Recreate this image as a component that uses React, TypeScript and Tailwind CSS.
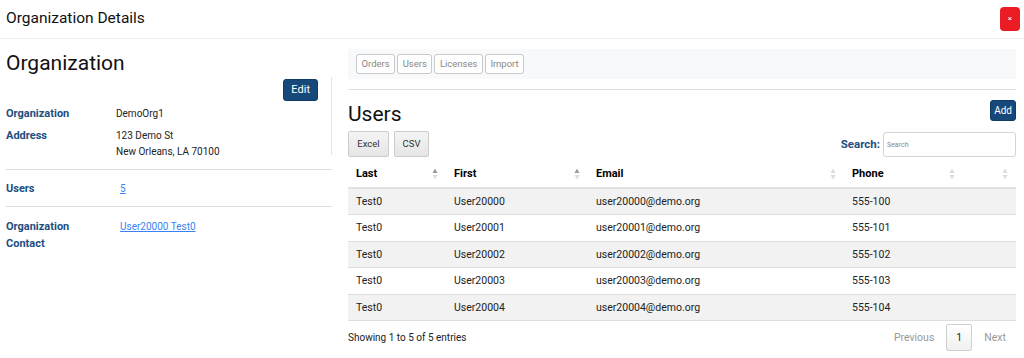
import { useState } from "react";

const users = [
  { last: "Test0", first: "User20000", email: "user20000@demo.org", phone: "555-100" },
  { last: "Test0", first: "User20001", email: "user20001@demo.org", phone: "555-101" },
  { last: "Test0", first: "User20002", email: "user20002@demo.org", phone: "555-102" },
  { last: "Test0", first: "User20003", email: "user20003@demo.org", phone: "555-103" },
  { last: "Test0", first: "User20004", email: "user20004@demo.org", phone: "555-104" },
];

const tabs = ["Orders", "Users", "Licenses", "Import"];

function SortIcon({ active }: { active?: boolean }) {
  return (
    <svg width="6" height="12" viewBox="0 0 6 12" className="shrink-0">
      <path d="M3 0.5 L5.5 5 H0.5 Z" fill={active ? "#9a9a9a" : "#dcdcdc"} />
      <path d="M3 11.5 L5.5 7 H0.5 Z" fill="#dcdcdc" />
    </svg>
  );
}

function Th({ label, width, active }: { label: string; width: string; active?: boolean }) {
  return (
    <th className={`${width} h-[27px] px-2 text-left font-bold text-[11px] text-black`}>
      <div className="flex items-center justify-between">
        <span>{label}</span>
        <SortIcon active={active} />
      </div>
    </th>
  );
}

export default function App() {
  const [query, setQuery] = useState("");

  return (
    <div
      className="w-[1024px] h-[358px] bg-white text-[#222] overflow-hidden"
      style={{ fontFamily: "Roboto, 'Noto Sans', sans-serif" }}
    >
      {/* Header */}
      <div className="h-[39px] flex items-center justify-between pl-[6px] pr-[4px] border-b border-[#eeeeee]">
        <span className="text-[15.5px] text-[#111]">Organization Details</span>
        <button className="w-[20px] h-[24px] rounded-[4px] bg-[#ec1c24] text-white text-[8px] leading-none flex items-center justify-center">
          ×
        </button>
      </div>

      <div className="flex pl-[6px] pr-[8px]">
        {/* Left */}
        <div className="w-[326px] shrink-0 pt-[10px]">
          <h1 className="text-[21px] leading-[28px] text-[#111]">Organization</h1>
          <div className="flex">
            <div className="flex-1">
              <div className="h-[29px]" />
              <div className="flex items-baseline leading-[16px]">
                <div className="w-[110px] font-bold text-[11px] text-[#1d4e80]">Organization</div>
                <div className="text-[10px]">DemoOrg1</div>
              </div>
              <div className="flex items-baseline leading-[16px] mt-[6px]">
                <div className="w-[110px] font-bold text-[11px] text-[#1d4e80]">Address</div>
                <div className="text-[10px]">
                  <div>123 Demo St</div>
                  <div>New Orleans, LA 70100</div>
                </div>
              </div>
            </div>
            <div className="pr-[13px] pt-[2px] border-r border-[#e5e5e5] h-[78px] flex items-start">
              <button className="h-[22px] px-[7px] rounded-[3px] bg-[#16497a] border border-[#0f3b66] text-white text-[11px]">
                Edit
              </button>
            </div>
          </div>
          <div className="border-t border-[#dddddd] mt-[9px]" />
          <div className="flex items-baseline leading-[16px] pt-[11px] pb-[9px]">
            <div className="w-[114px] font-bold text-[11px] text-[#1d4e80]">Users</div>
            <a className="text-[10px] text-[#3b82f6] underline">5</a>
          </div>
          <div className="border-t border-[#dddddd]" />
          <div className="flex leading-[17px] pt-[11px]">
            <div className="w-[114px] font-bold text-[11px] text-[#1d4e80]">
              <div>Organization</div>
              <div>Contact</div>
            </div>
            <a className="text-[10px] text-[#3b82f6] underline">User20000 Test0</a>
          </div>
        </div>

        {/* Right */}
        <div className="flex-1 ml-[16px] pt-[10px]">
          <div className="h-[30px] bg-[#f8f9fa] flex items-center gap-[2px] pl-[8px]">
            {tabs.map((t) => (
              <button
                key={t}
                className="h-[20px] px-[4.5px] border border-[#c8c8c8] rounded-[3px] bg-white text-[9.5px] text-[#888]"
              >
                {t}
              </button>
            ))}
          </div>
          <div className="border-t border-[#e0e0e0] mt-[10px]" />

          <div className="flex items-end justify-between mt-[10px]">
            <h2 className="text-[21px] leading-[26px] text-[#111]">Users</h2>
            <button className="h-[21px] px-[3px] rounded-[3px] bg-[#16497a] border border-[#0f3b66] text-white text-[10px] mb-[6px]">
              Add
            </button>
          </div>

          <div className="flex items-end justify-between mt-[4px]">
            <div className="flex gap-[5px]">
              <button className="h-[26px] w-[41px] border border-[#cccccc] rounded-[2px] bg-gradient-to-b from-[#f4f4f4] to-[#e6e6e6] text-[9.5px] text-[#333]">
                Excel
              </button>
              <button className="h-[26px] w-[35px] border border-[#cccccc] rounded-[2px] bg-gradient-to-b from-[#f4f4f4] to-[#e6e6e6] text-[9.5px] text-[#333]">
                CSV
              </button>
            </div>
            <label className="flex items-center gap-[3px]">
              <span className="text-[11.5px] font-bold text-[#1d4e80]">Search:</span>
              <input
                value={query}
                onChange={(e) => setQuery(e.target.value)}
                placeholder="Search"
                className="w-[133px] h-[25px] border border-[#d5d5d5] rounded-[3px] px-[3px] text-[7px] placeholder:text-[#888] outline-none"
              />
            </label>
          </div>

          <table className="w-full mt-[4px] border-collapse text-[10.5px]">
            <thead>
              <tr className="border-b-2 border-[#e2e2e2]">
                <Th label="Last" width="w-[98px]" active />
                <Th label="First" width="w-[142px]" active />
                <Th label="Email" width="w-[256px]" />
                <Th label="Phone" width="w-[119px]" />
                <Th label="" width="" />
              </tr>
            </thead>
            <tbody>
              {users.map((u, i) => (
                <tr
                  key={u.email}
                  className={`border-b border-[#dddddd] ${i % 2 === 0 ? "bg-[#f2f2f2]" : "bg-white"}`}
                >
                  <td className="h-[26.6px] px-2">{u.last}</td>
                  <td className="px-2">{u.first}</td>
                  <td className="px-2">{u.email}</td>
                  <td className="px-2">{u.phone}</td>
                  <td className="px-2" />
                </tr>
              ))}
            </tbody>
          </table>

          <div className="flex items-center justify-between mt-[3px] text-[10px]">
            <span>Showing 1 to 5 of 5 entries</span>
            <div className="flex items-center text-[10.5px]">
              <span className="text-[#999] px-[12px]">Previous</span>
              <span className="w-[26px] h-[27px] border border-[#d0d0d0] rounded-[2px] bg-gradient-to-b from-white to-[#f0f0f0] flex items-center justify-center">
                1
              </span>
              <span className="text-[#999] pl-[12px] pr-[10px]">Next</span>
            </div>
          </div>
        </div>
      </div>
    </div>
  );
}
